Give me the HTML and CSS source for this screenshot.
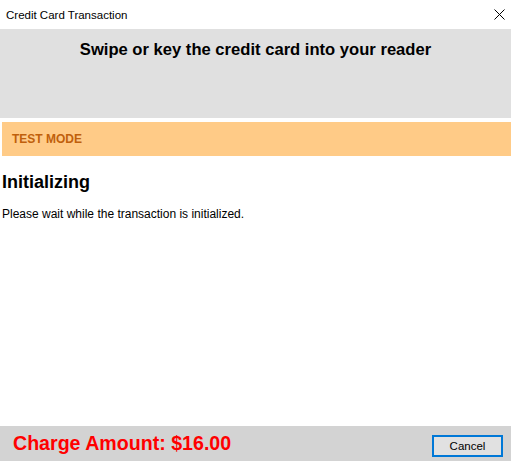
FILE: index.html
```html
<!DOCTYPE html>
<html lang="en">
<head>
    <meta charset="UTF-8">
    <meta name="viewport" content="width=device-width, initial-scale=1.0">
    <title>Credit Card Transaction</title>
    <link rel="stylesheet" href="styles.css">
</head>
<body>
    <div class="window">
        <div class="titlebar">
            <span class="title">Credit Card Transaction</span>
            <svg class="close" width="11" height="11" viewBox="0 0 11 11">
                <path d="M0.5 0.5 L10.5 10.5 M10.5 0.5 L0.5 10.5" stroke="#000" stroke-width="1" fill="none"/>
            </svg>
        </div>
        <div class="prompt">Swipe or key the credit card into your reader</div>
        <div class="test-mode">TEST MODE</div>
        <div class="content">
            <h2 class="status-title">Initializing</h2>
            <p class="status-text">Please wait while the transaction is initialized.</p>
        </div>
        <div class="footer">
            <span class="amount">Charge Amount: $16.00</span>
            <button class="cancel">Cancel</button>
        </div>
    </div>
</body>
</html>
```

FILE: styles.css
```css
body { margin: 0; background: #fff; font-family: "Liberation Sans", Arial, sans-serif; }
.window { display: flex; flex-direction: column; width: 511px; height: 461px; }
.titlebar { height: 29px; display: flex; align-items: center; justify-content: space-between; padding: 0 6px; box-sizing: border-box; }
.title { font-size: 11.5px; color: #000; }
.prompt { background: #e0e0e0; height: 89px; box-sizing: border-box; padding-top: 11px; text-align: center; font-weight: bold; font-size: 16.6px; color: #000; }
.test-mode { margin: 4px 0 0 2px; height: 34px; background: #ffcb87; color: #c0600c; font-weight: bold; font-size: 12px; display: flex; align-items: center; padding-left: 10px; }
.content { flex: 1; padding: 0 2px; }
.status-title { margin: 16px 0 0; font-size: 18px; font-weight: bold; color: #000; }
.status-text { margin: 14px 0 0; font-size: 12px; color: #000; }
.footer { height: 35px; background: #d3d3d3; display: flex; align-items: center; justify-content: space-between; padding: 0 8px 0 13px; }
.amount { color: #ff0000; font-weight: bold; font-size: 19.6px; }
.cancel { width: 71px; height: 22px; margin-top: 4px; background: #e1e1e1; border: 2px solid #0078d7; font-family: "Liberation Sans", Arial, sans-serif; font-size: 11.5px; color: #000; padding: 0; }
```
